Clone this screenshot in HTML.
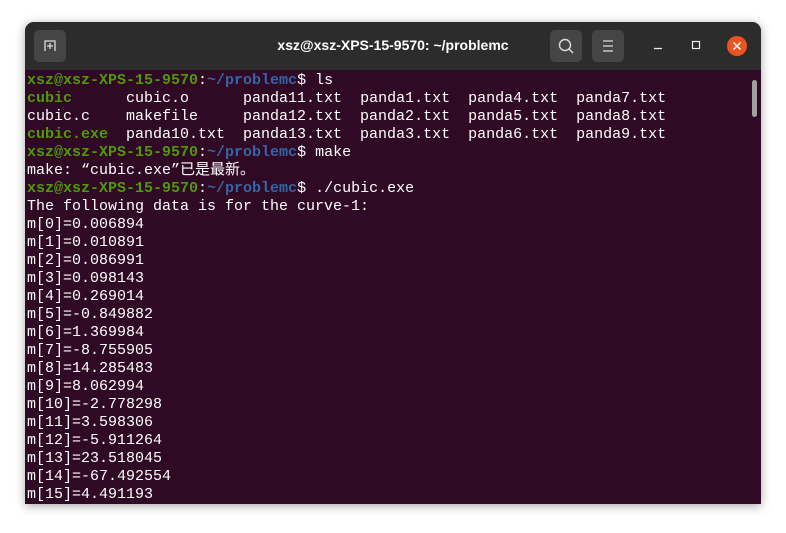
<!DOCTYPE html>
<html><head><meta charset="utf-8"><style>
body{margin:0;width:786px;height:533px;background:#fff;overflow:hidden;position:relative}
.win{position:absolute;left:25px;top:22px;width:736px;height:482px;border-radius:9px 9px 0 0;overflow:hidden;box-shadow:0 2px 10px rgba(0,0,0,.35);background:#300a24}
.hdr{height:48px;background:#2c2c2c;position:relative}
.btn{position:absolute;top:8px;width:32px;height:32px;background:#454545;border-radius:5px}
.title{position:absolute;left:0;right:0;top:15px;text-align:center;color:#fff;font:bold 14px "Liberation Sans",sans-serif;}
.term{position:absolute;left:2px;top:50px;font:15px/18px "Liberation Mono","Noto Sans CJK SC",monospace;color:#fff;white-space:pre}
.g{color:#4e9a06;font-weight:bold}.b{color:#3465a4;font-weight:bold}
.sb{position:absolute;right:4px;top:58px;width:5px;height:37px;background:#a0a0a0;border-radius:3px}
</style></head><body>
<div class="win">
<div class="hdr">
<div class="btn" style="left:9px"><svg width="32" height="32"><path d="M11 21V11h10v10M16 13v6M13 16h6" stroke="#ddd" stroke-width="1.3" fill="none"/></svg></div>
<div class="title">xsz@xsz-XPS-15-9570: ~/problemc</div>
<div class="btn" style="left:525px"><svg width="32" height="32"><circle cx="15" cy="15" r="5.5" stroke="#ddd" stroke-width="1.4" fill="none"/><path d="M19 19l4 4" stroke="#ddd" stroke-width="1.5"/></svg></div>
<div class="btn" style="left:567px"><svg width="32" height="32"><path d="M11 11h10M11 16h10M11 21h10" stroke="#ddd" stroke-width="1.2"/></svg></div>
<svg style="position:absolute;left:626px;top:16px" width="16" height="16"><path d="M3 10.5h8" stroke="#eee" stroke-width="1.3"/></svg>
<svg style="position:absolute;left:664px;top:16px" width="16" height="16"><rect x="3.5" y="3.5" width="7" height="7" stroke="#eee" stroke-width="1.2" fill="none"/></svg>
<div style="position:absolute;left:702px;top:14px;width:20px;height:20px;border-radius:50%;background:#e95420"><svg width="20" height="20"><path d="M6.5 6.5l7 7M13.5 6.5l-7 7" stroke="#fff" stroke-width="1.5"/></svg></div>
</div>
<div class="sb"></div>
<div class="term"><span class="g">xsz@xsz-XPS-15-9570</span>:<span class="b">~/problemc</span>$ ls
<span class="g">cubic</span>      cubic.o      panda11.txt  panda1.txt  panda4.txt  panda7.txt
cubic.c    makefile     panda12.txt  panda2.txt  panda5.txt  panda8.txt
<span class="g">cubic.exe</span>  panda10.txt  panda13.txt  panda3.txt  panda6.txt  panda9.txt
<span class="g">xsz@xsz-XPS-15-9570</span>:<span class="b">~/problemc</span>$ make
make: “cubic.exe”已是最新。
<span class="g">xsz@xsz-XPS-15-9570</span>:<span class="b">~/problemc</span>$ ./cubic.exe
The following data is for the curve-1:
m[0]=0.006894
m[1]=0.010891
m[2]=0.086991
m[3]=0.098143
m[4]=0.269014
m[5]=-0.849882
m[6]=1.369984
m[7]=-8.755905
m[8]=14.285483
m[9]=8.062994
m[10]=-2.778298
m[11]=3.598306
m[12]=-5.911264
m[13]=23.518045
m[14]=-67.492554
m[15]=4.491193</div>
</div>
</body></html>
